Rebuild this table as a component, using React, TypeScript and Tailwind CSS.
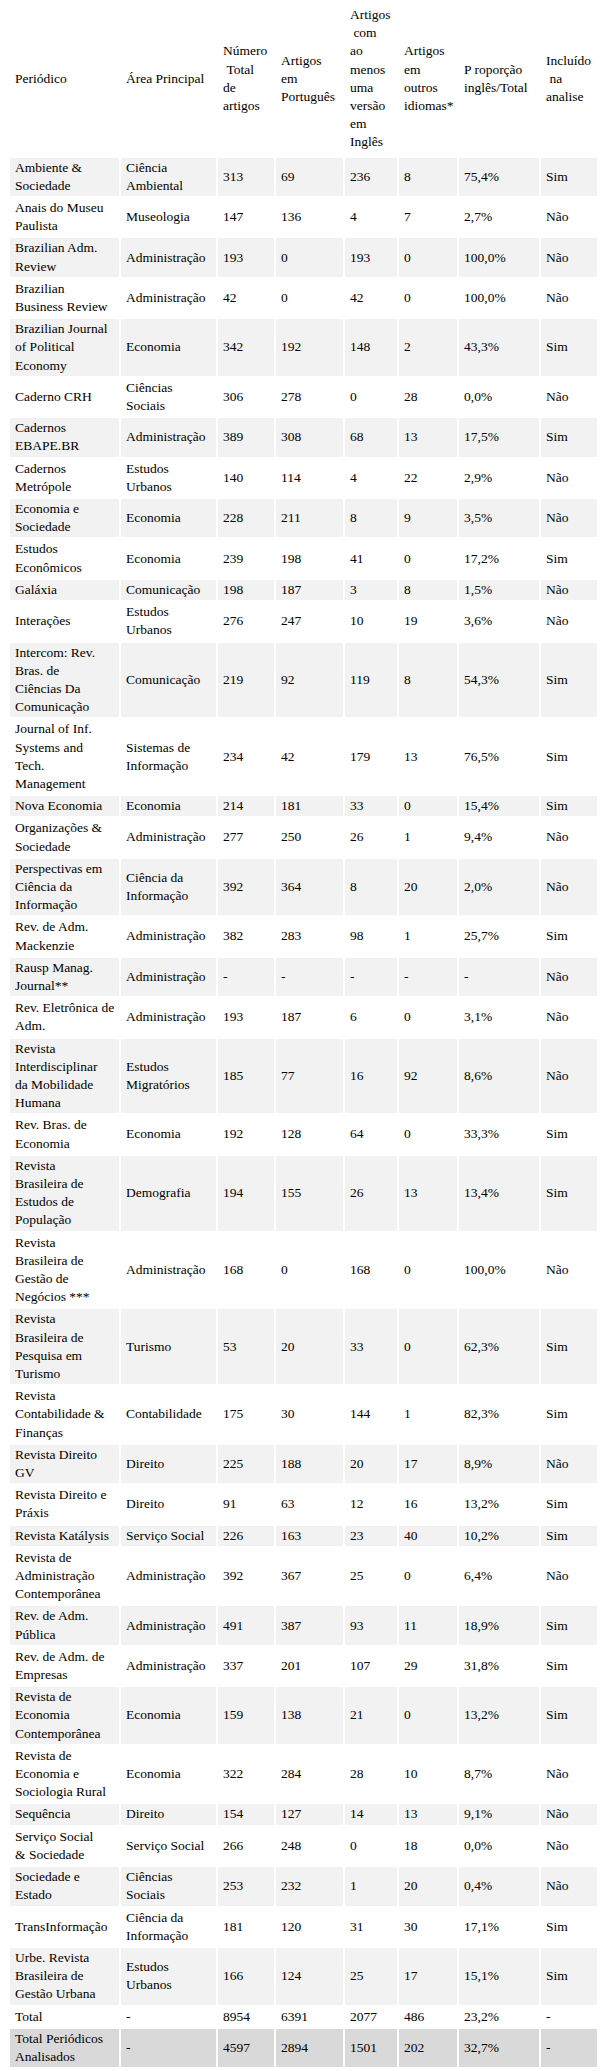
type Row = {
  name: string[];
  area: string[];
  vals: string[];
  tone?: "total" | "analised";
};

const header: string[][] = [
  ["Periódico"],
  ["Área Principal"],
  ["Número", "\u00a0Total", "de", "artigos"],
  ["Artigos", "em", "Português"],
  ["Artigos", "\u00a0com", "ao", "menos", "uma", "versão", "em", "Inglês"],
  ["Artigos", "em", "outros", "idiomas*"],
  ["P roporção", "inglês/Total"],
  ["Incluído", "\u00a0na", "analise"],
];

const rows: Row[] = [
  { name: ["Ambiente &", "Sociedade"], area: ["Ciência", "Ambiental"], vals: ["313", "69", "236", "8", "75,4%", "Sim"] },
  { name: ["Anais do Museu", "Paulista"], area: ["Museologia"], vals: ["147", "136", "4", "7", "2,7%", "Não"] },
  { name: ["Brazilian Adm.", "Review"], area: ["Administração"], vals: ["193", "0", "193", "0", "100,0%", "Não"] },
  { name: ["Brazilian", "Business Review"], area: ["Administração"], vals: ["42", "0", "42", "0", "100,0%", "Não"] },
  { name: ["Brazilian Journal", "of Political", "Economy"], area: ["Economia"], vals: ["342", "192", "148", "2", "43,3%", "Sim"] },
  { name: ["Caderno CRH"], area: ["Ciências", "Sociais"], vals: ["306", "278", "0", "28", "0,0%", "Não"] },
  { name: ["Cadernos", "EBAPE.BR"], area: ["Administração"], vals: ["389", "308", "68", "13", "17,5%", "Sim"] },
  { name: ["Cadernos", "Metrópole"], area: ["Estudos", "Urbanos"], vals: ["140", "114", "4", "22", "2,9%", "Não"] },
  { name: ["Economia e", "Sociedade"], area: ["Economia"], vals: ["228", "211", "8", "9", "3,5%", "Não"] },
  { name: ["Estudos", "Econômicos"], area: ["Economia"], vals: ["239", "198", "41", "0", "17,2%", "Sim"] },
  { name: ["Galáxia"], area: ["Comunicação"], vals: ["198", "187", "3", "8", "1,5%", "Não"] },
  { name: ["Interações"], area: ["Estudos", "Urbanos"], vals: ["276", "247", "10", "19", "3,6%", "Não"] },
  { name: ["Intercom: Rev.", "Bras. de", "Ciências Da", "Comunicação"], area: ["Comunicação"], vals: ["219", "92", "119", "8", "54,3%", "Sim"] },
  { name: ["Journal of Inf.", "Systems and", "Tech.", "Management"], area: ["Sistemas de", "Informação"], vals: ["234", "42", "179", "13", "76,5%", "Sim"] },
  { name: ["Nova Economia"], area: ["Economia"], vals: ["214", "181", "33", "0", "15,4%", "Sim"] },
  { name: ["Organizações &", "Sociedade"], area: ["Administração"], vals: ["277", "250", "26", "1", "9,4%", "Não"] },
  { name: ["Perspectivas em", "Ciência da", "Informação"], area: ["Ciência da", "Informação"], vals: ["392", "364", "8", "20", "2,0%", "Não"] },
  { name: ["Rev. de Adm.", "Mackenzie"], area: ["Administração"], vals: ["382", "283", "98", "1", "25,7%", "Sim"] },
  { name: ["Rausp Manag.", "Journal**"], area: ["Administração"], vals: ["-", "-", "-", "-", "-", "Não"] },
  { name: ["Rev. Eletrônica de", "Adm."], area: ["Administração"], vals: ["193", "187", "6", "0", "3,1%", "Não"] },
  { name: ["Revista", "Interdisciplinar", "da Mobilidade", "Humana"], area: ["Estudos", "Migratórios"], vals: ["185", "77", "16", "92", "8,6%", "Não"] },
  { name: ["Rev. Bras. de", "Economia"], area: ["Economia"], vals: ["192", "128", "64", "0", "33,3%", "Sim"] },
  { name: ["Revista", "Brasileira de", "Estudos de", "População"], area: ["Demografia"], vals: ["194", "155", "26", "13", "13,4%", "Sim"] },
  { name: ["Revista", "Brasileira de", "Gestão de", "Negócios ***"], area: ["Administração"], vals: ["168", "0", "168", "0", "100,0%", "Não"] },
  { name: ["Revista", "Brasileira de", "Pesquisa em", "Turismo"], area: ["Turismo"], vals: ["53", "20", "33", "0", "62,3%", "Sim"] },
  { name: ["Revista", "Contabilidade &", "Finanças"], area: ["Contabilidade"], vals: ["175", "30", "144", "1", "82,3%", "Sim"] },
  { name: ["Revista Direito", "GV"], area: ["Direito"], vals: ["225", "188", "20", "17", "8,9%", "Não"] },
  { name: ["Revista Direito e", "Práxis"], area: ["Direito"], vals: ["91", "63", "12", "16", "13,2%", "Sim"] },
  { name: ["Revista Katálysis"], area: ["Serviço Social"], vals: ["226", "163", "23", "40", "10,2%", "Sim"] },
  { name: ["Revista de", "Administração", "Contemporânea"], area: ["Administração"], vals: ["392", "367", "25", "0", "6,4%", "Não"] },
  { name: ["Rev. de Adm.", "Pública"], area: ["Administração"], vals: ["491", "387", "93", "11", "18,9%", "Sim"] },
  { name: ["Rev. de Adm. de", "Empresas"], area: ["Administração"], vals: ["337", "201", "107", "29", "31,8%", "Sim"] },
  { name: ["Revista de", "Economia", "Contemporânea"], area: ["Economia"], vals: ["159", "138", "21", "0", "13,2%", "Sim"] },
  { name: ["Revista de", "Economia e", "Sociologia Rural"], area: ["Economia"], vals: ["322", "284", "28", "10", "8,7%", "Não"] },
  { name: ["Sequência"], area: ["Direito"], vals: ["154", "127", "14", "13", "9,1%", "Não"] },
  { name: ["Serviço Social", "& Sociedade"], area: ["Serviço Social"], vals: ["266", "248", "0", "18", "0,0%", "Não"] },
  { name: ["Sociedade e", "Estado"], area: ["Ciências", "Sociais"], vals: ["253", "232", "1", "20", "0,4%", "Não"] },
  { name: ["TransInformação"], area: ["Ciência da", "Informação"], vals: ["181", "120", "31", "30", "17,1%", "Sim"] },
  { name: ["Urbe. Revista", "Brasileira de", "Gestão Urbana"], area: ["Estudos", "Urbanos"], vals: ["166", "124", "25", "17", "15,1%", "Sim"] },
  { name: ["Total"], area: ["-"], vals: ["8954", "6391", "2077", "486", "23,2%", "-"], tone: "total" },
  { name: ["Total Periódicos", "Analisados"], area: ["-"], vals: ["4597", "2894", "1501", "202", "32,7%", "-"], tone: "analised" },
];

const Lines = ({ lines }: { lines: string[] }) => (
  <>
    {lines.map((l, i) => (
      <span key={i} className="block whitespace-nowrap">
        {l}
      </span>
    ))}
  </>
);

const rowBg = (r: Row, i: number) => {
  if (r.tone === "analised") return "bg-[#d9d9d9]";
  if (r.tone === "total") return "bg-white";
  return i % 2 === 0 ? "bg-[#f2f2f2]" : "bg-white";
};

const cell = "pl-[5px] pr-[2px] py-px align-middle text-left";

export default function App() {
  return (
    <div className="bg-white pl-2 font-['Liberation_Serif','Times_New_Roman',serif] text-[13.5px] leading-[18.2px] text-black">
      <table className="w-[591px] table-fixed border-separate border-spacing-[2px]">
        <colgroup>
          <col className="w-[109px]" />
          <col className="w-[95px]" />
          <col className="w-[56px]" />
          <col className="w-[67px]" />
          <col className="w-[52px]" />
          <col className="w-[58px]" />
          <col className="w-[80px]" />
          <col className="w-[56px]" />
        </colgroup>
        <thead>
          <tr>
            {header.map((h, i) => (
              <th key={i} className="pl-[5px] pr-[2px] py-[4px] align-middle text-left font-normal">
                <Lines lines={h} />
              </th>
            ))}
          </tr>
        </thead>
        <tbody>
          {rows.map((r, i) => (
            <tr key={i} className={rowBg(r, i)}>
              <td className={cell}>
                <Lines lines={r.name} />
              </td>
              <td className={cell}>
                <Lines lines={r.area} />
              </td>
              {r.vals.map((v, j) => (
                <td key={j} className={cell + " whitespace-nowrap"}>
                  {v}
                </td>
              ))}
            </tr>
          ))}
        </tbody>
      </table>
    </div>
  );
}
